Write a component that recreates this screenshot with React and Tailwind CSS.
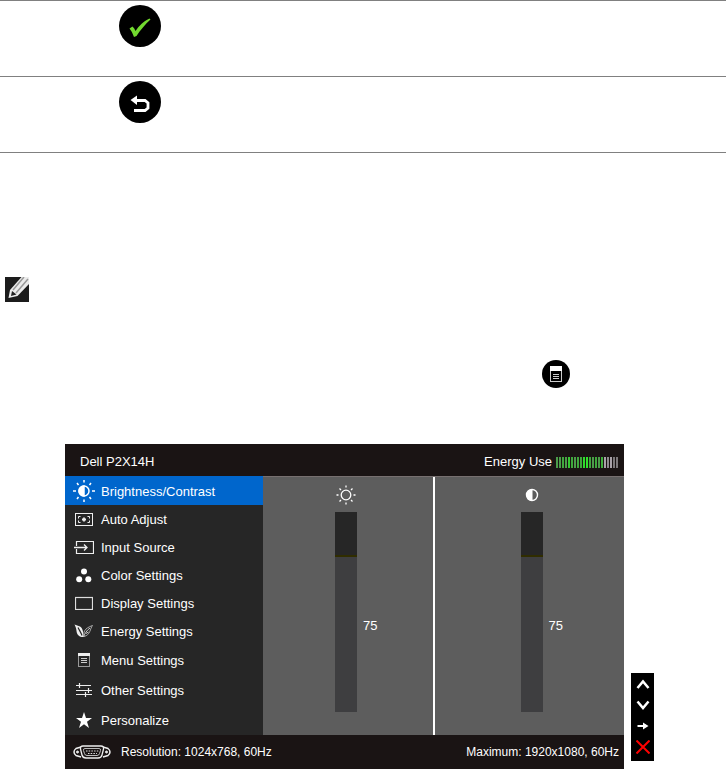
import { useState } from 'react';

const MENU_TOP = [
  { label: 'Auto Adjust', icon: AutoAdjustIcon },
  { label: 'Input Source', icon: InputIcon },
  { label: 'Color Settings', icon: ColorIcon },
  { label: 'Display Settings', icon: DisplayIcon },
  { label: 'Energy Settings', icon: LeafIcon },
];

const MENU_BOTTOM = [
  { label: 'Menu Settings', icon: MenuIcon },
  { label: 'Other Settings', icon: TuneIcon },
  { label: 'Personalize', icon: StarIcon },
];

const ENERGY_BARS = [
  'bg-[#4c9c4a]', 'bg-[#4c9c4a]', 'bg-[#3fa83c]', 'bg-[#4c9c4a]', 'bg-[#37c933]', 'bg-[#3fa83c]', 'bg-[#4c9c4a]',
  'bg-[#3fa83c]', 'bg-[#3fa83c]', 'bg-[#2fdc2b]', 'bg-[#2fe52b]', 'bg-[#3fa83c]', 'bg-[#4c9c4a]', 'bg-[#3fa83c]',
  'bg-[#4c9c4a]', 'bg-[#3fb03c]', 'bg-[#a9a2a9]', 'bg-[#8f8a8f]', 'bg-[#a9a2a9]', 'bg-[#7c787a]', 'bg-[#7c787a]',
];

function BrightnessIcon() {
  return (
    <svg width="22" height="22" viewBox="0 0 22 22" fill="none" stroke="white" strokeWidth="1.5">
      <circle cx="11" cy="11" r="5" />
      <path d="M11 6a5 5 0 0 0 0 10z" fill="white" />
      <path d="M11 0v2.5M11 19.500v2.500M0 11h3M19 11h3M4 3l1.500 2M16.500 17l1.500 2M18 3l-1.500 2M5.500 17L4 19" />
    </svg>
  );
}

function AutoAdjustIcon() {
  return (
    <svg width="18" height="14" viewBox="0 0 18 14" fill="none" stroke="#eee">
      <rect x="0.5" y="1.5" width="17" height="12" />
      <path d="M3.500 6.500V4.500H5.500M12.500 4.500h2V6.500M14.500 8.500v2H12.500M5.500 10.500h-2V8.500" />
      <path d="M9 5.500v4M7 7.500h4" strokeWidth="1.800" />
    </svg>
  );
}

function InputIcon() {
  return (
    <svg width="20" height="14" viewBox="0 0 20 14" fill="none" stroke="#eee">
      <path d="M2.500 6V1.500h17v12h-17V9" strokeWidth="1.200" />
      <path d="M0 7.500h13M10 4.500l3 3L10 10.500" strokeWidth="1.300" />
    </svg>
  );
}

function ColorIcon() {
  return (
    <svg width="16" height="16" viewBox="0 0 16 16" fill="white">
      <circle cx="8" cy="4.500" r="3" />
      <circle cx="3.200" cy="12.200" r="3" />
      <circle cx="12.300" cy="12.200" r="3" />
    </svg>
  );
}

function DisplayIcon() {
  return (
    <svg width="18" height="14" viewBox="0 0 18 14" fill="none" stroke="#ddd">
      <rect x="0.5" y="1.500" width="17" height="12" strokeWidth="1.200" />
    </svg>
  );
}

function LeafIcon() {
  return (
    <svg width="20" height="14" viewBox="0 0 20 14" fill="none">
      <path d="M0.500 0.500L6 2.500C9 4.500 9.500 8 9 13C5.500 13 3 11 2.500 7C2.300 4 1.500 2.500 0.500 0.500z" fill="#eee" />
      <path d="M4 3.500c1.500 3 3 5 4 8" stroke="#262626" strokeWidth="1.200" />
      <path d="M9.500 13C9.500 8 10 4.500 18.500 1.500C16 4.500 16.500 11 10 12.500" stroke="#aaa" />
      <path d="M9.500 13c1-3 3-6.500 6.500-9M12 9.500l2.500-1.500" stroke="#ccc" />
    </svg>
  );
}

function MenuIcon() {
  return (
    <svg width="12" height="14" viewBox="0 0 12 14" fill="none">
      <rect x="0.500" y="0.500" width="11" height="13" fill="#262626" stroke="#999" />
      <path d="M0 0h12v3H0z" fill="#eee" />
      <path d="M3 5.500h6M3 7.500h6M3 9.500h6" stroke="#ccc" />
    </svg>
  );
}

function TuneIcon() {
  return (
    <svg width="18" height="14" viewBox="0 0 18 14" stroke="#eee" strokeWidth="1.200">
      <path d="M1 2.500h15M1 7.500h16M1 11.500h16M4.500 0v5M13.500 5v5M10.500 9v5" />
    </svg>
  );
}

function StarIcon() {
  return (
    <svg width="16" height="16" viewBox="0 0 16 16" fill="white">
      <path d="M8 0l2 6h6l-5 3.800 2 6.200-5-3.800L3 16l2-6.200L0 6h6z" />
    </svg>
  );
}

function SunIcon() {
  return (
    <svg width="20" height="20" viewBox="0 0 20 20" fill="none" stroke="white" strokeWidth="1.300">
      <circle cx="10" cy="10" r="4.800" />
      <path d="M10 0.500v2M10 17.500v2M0.500 10h2M17.500 10h2M3.500 3.500l1.500 1.500M15 15l1.500 1.500M16.500 3.500L15 5M5 15l-1.500 1.500" />
    </svg>
  );
}

function ContrastIcon() {
  return (
    <svg width="14" height="14" viewBox="0 0 14 14">
      <circle cx="7" cy="7" r="5.500" fill="none" stroke="white" strokeWidth="1.400" />
      <path d="M7.500 1a6 6 0 1 0 0 12z" fill="white" />
    </svg>
  );
}

function VgaIcon() {
  return (
    <svg width="38" height="14" viewBox="0 0 38 14" fill="none" stroke="#eee">
      <path d="M8 2L3 3.500Q1 5 1 7T3 10.500L8 12M30 2L35 3.500Q37 5 37 7T35 10.500L30 12" strokeWidth="1.500" />
      <path d="M10 1h18q3 0 2.500 3l-1.500 6q-0.700 3-4 3H13q-3.300 0-4-3L7.500 4Q7 1 10 1z" strokeWidth="1.300" />
      <path d="M12 3.500h14q2 0 1.500 2l-1 3q-0.500 2-2.500 2H14q-2 0-2.500-2l-1-3q-0.500-2 1.500-2z" stroke="#bbb" />
      <path d="M13 6h13M15 8.500h9" stroke="#ddd" strokeDasharray="1.500 1.200" />
      <circle cx="4.500" cy="7" r="1" fill="#eee" />
      <circle cx="33.500" cy="7" r="1" fill="#eee" />
    </svg>
  );
}

function RoundButton({ label, children }) {
  return (
    <button type="button" aria-label={label} className="flex size-[42px] items-center justify-center rounded-full bg-black">
      {children}
    </button>
  );
}

function MenuItem({ item, active, className }) {
  const Icon = item.icon;
  return (
    <button type="button" className={`flex w-full items-center gap-1.5 pl-2 text-left ${active ? 'bg-[#0066cc]' : ''} ${className}`}>
      <span className="flex w-[22px] justify-center"><Icon /></span>
      <span className="pt-0.5">{item.label}</span>
    </button>
  );
}

function LevelPane({ label, icon: Icon, value, onChange, className }) {
  const edge = 97.5 - value;
  return (
    <div className={`flex flex-col items-center pt-2 ${className}`}>
      <div className="flex h-5 items-center"><Icon /></div>
      <div className="mt-[7px] grid w-full grid-cols-[1fr_22px_1fr] items-center">
        <input
          type="range"
          aria-label={label}
          min="0"
          max="100"
          value={value}
          onChange={(e) => onChange(Number(e.target.value))}
          className="col-start-2 h-[200px] w-[22px] appearance-none [direction:rtl] [writing-mode:vertical-lr] [&::-webkit-slider-thumb]:size-0 [&::-webkit-slider-thumb]:appearance-none"
          style={{
            background: `linear-gradient(#262626 ${edge - 1}%, #302d00 ${edge - 1}%, #302d00 ${edge}%, #3e3e40 ${edge}%)`,
          }}
        />
        <output className="pt-7 pl-1.5">{value}</output>
      </div>
    </div>
  );
}

export default function App() {
  const [brightness, setBrightness] = useState(75);
  const [contrast, setContrast] = useState(75);

  return (
    <main className="bg-white font-['Liberation_Sans',Arial,sans-serif] text-[13px] leading-4 text-white">
      {/* Front panel buttons */}
      <div className="h-[76px] border-t border-[#808080] pt-1 pl-[119px]">
        <RoundButton label="OK">
          <svg width="22" height="20" viewBox="0 0 22 20" className="mt-1">
            <path d="M0.500 10.500L3.500 8.500q2 1.500 3 4.500C10 8 14 3.500 20.500 0.500L21.500 1.500C16 6.500 11.500 12 7.500 18L5 19Q3.500 14 0.500 10.500z" fill="#72d92f" />
          </svg>
        </RoundButton>
      </div>
      <div className="h-[76px] border-t border-[#808080] pt-1 pl-[119px]">
        <RoundButton label="Back">
          <svg width="20" height="18" viewBox="0 0 20 18" fill="none" className="mt-1">
            <path d="M5 5.500h10l3 2.500v5l-3 2.500H4" stroke="white" strokeWidth="2.800" />
            <path d="M0.500 5L7 0.500v9.500z" fill="white" />
          </svg>
        </RoundButton>
      </div>

      <div className="border-t border-[#808080] pt-[124px] pl-[5px]">
        <svg width="24" height="25" viewBox="0 0 24 25" role="img" aria-label="Note">
          <path d="M0 0h24v25H0z" fill="#1c1c1c" />
          <path d="M16.500 0L5 13L3.500 21L12.500 19L24 7V0z" fill="#ececec" />
          <path d="M19 0L8 13" stroke="#999" strokeWidth="1.500" />
          <path d="M23 2L11 16" stroke="#999" strokeWidth="1.500" />
          <path d="M7 14l4.500 3.500L6 19z" fill="#222" />
        </svg>
      </div>

      <div className="mt-[58px] flex justify-end pr-[156px]">
        <button type="button" aria-label="Menu" className="flex size-7 items-center justify-center rounded-full bg-black">
          <svg width="12" height="16" viewBox="0 0 12 16" fill="none" stroke="#ccc">
            <rect x="0.500" y="0.500" width="11" height="15" />
            <path d="M0 0h12v5H0z" fill="white" stroke="none" />
            <path d="M3 8.500h6M3 10.500h6M3 12.500h6" />
          </svg>
        </button>
      </div>

      {/* On-screen display */}
      <div className="mt-14 flex items-end pr-[72px] pl-[65px]">
        <section className="flex-1 bg-[#1a1414]">
          <header className="flex h-8 items-center justify-between pt-1 pr-1.5 pl-[15px]">
            <h1>Dell P2X14H</h1>
            <div className="flex items-center gap-1">
              Energy Use
              <div className="flex h-[11px] gap-px">
                {ENERGY_BARS.map((color, i) => (
                  <span key={i} className={`w-[2px] ${color}`} />
                ))}
              </div>
            </div>
          </header>

          <div className="flex bg-[#5d5d5d]">
            <nav className="w-[198px] bg-[#262626]">
              <MenuItem item={{ label: 'Brightness/Contrast', icon: BrightnessIcon }} active className="h-[29px]" />
              {MENU_TOP.map((item) => (
                <MenuItem key={item.label} item={item} className="h-7" />
              ))}
              {MENU_BOTTOM.map((item) => (
                <MenuItem key={item.label} item={item} className="h-[30px]" />
              ))}
            </nav>
            <div className="flex flex-1 border-t border-[#777070]">
              <LevelPane label="Brightness" icon={SunIcon} value={brightness} onChange={setBrightness} className="flex-[170] pr-1" />
              <div className="w-[2px] bg-white" />
              <LevelPane label="Contrast" icon={ContrastIcon} value={contrast} onChange={setContrast} className="flex-[189] pl-1" />
            </div>
          </div>

          <footer className="flex h-[34px] items-center justify-between pr-[5px] pl-2 text-[12px]">
            <div className="flex items-center gap-2.5">
              <VgaIcon />
              Resolution: 1024x768, 60Hz
            </div>
            <span>Maximum: 1920x1080, 60Hz</span>
          </footer>
        </section>

        <div className="mb-2 ml-[7px] flex w-[23px] flex-col items-center bg-black">
          <button type="button" aria-label="Up" className="flex h-[22px] items-center">
            <svg width="14" height="10" viewBox="0 0 14 10" fill="none" stroke="white" strokeWidth="2.500">
              <path d="M1.500 9L7 2.500L12.500 9" />
            </svg>
          </button>
          <button type="button" aria-label="Down" className="flex h-5 items-center">
            <svg width="14" height="10" viewBox="0 0 14 10" fill="none" stroke="white" strokeWidth="2.500">
              <path d="M1.500 1.500L7 8L12.500 1.500" />
            </svg>
          </button>
          <button type="button" aria-label="Enter" className="flex h-[22px] items-center">
            <svg width="12" height="8" viewBox="0 0 12 8" fill="white">
              <path d="M0.500 3h5.500V0.500L11.500 4L6 7.500V5H0.500z" />
            </svg>
          </button>
          <button type="button" aria-label="Exit" className="flex h-6 items-start pt-[3px]">
            <svg width="14" height="14" viewBox="0 0 14 14" fill="none" stroke="#ff0000" strokeWidth="2">
              <path d="M0.500 0.500l13 13M13.500 0.500l-13 13" />
            </svg>
          </button>
        </div>
      </div>
    </main>
  );
}
